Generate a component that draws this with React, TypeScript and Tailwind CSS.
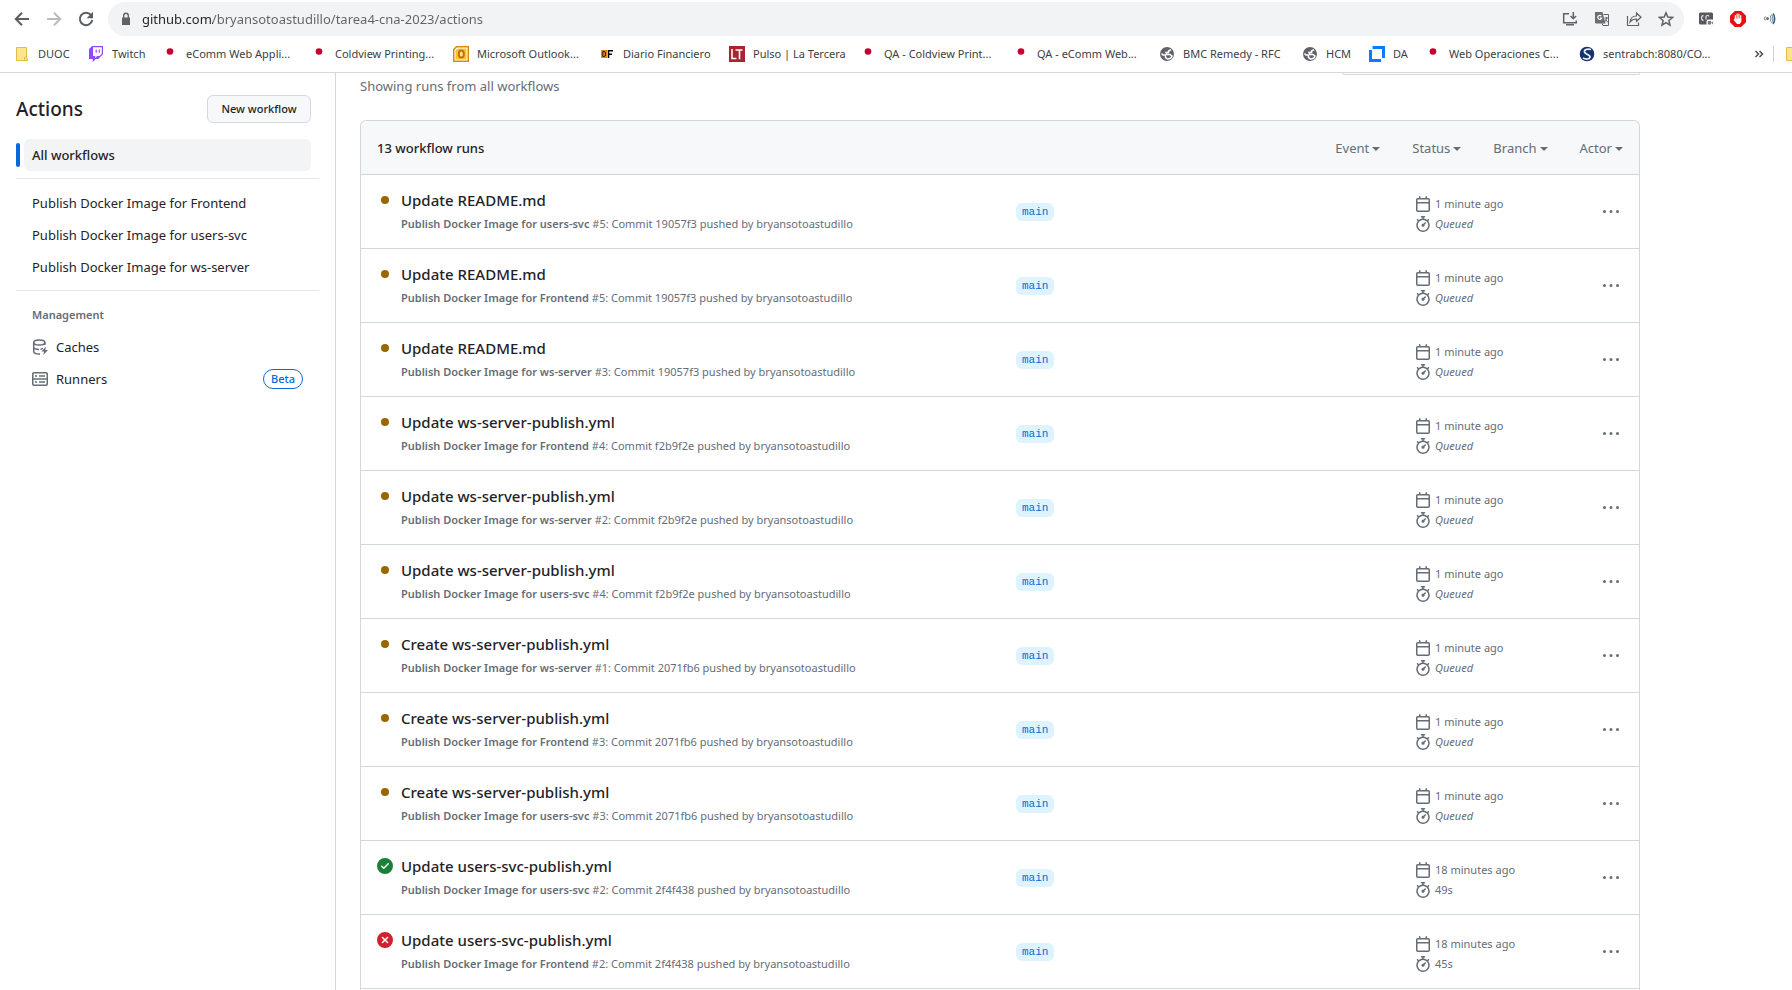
import React from "react";

const paths = {
  calendar:
    "M4.75 0a.75.75 0 0 1 .75.75V2h5V.75a.75.75 0 0 1 1.5 0V2h1.25c.966 0 1.75.784 1.75 1.75v10.5A1.75 1.75 0 0 1 13.25 16H2.75A1.75 1.75 0 0 1 1 14.25V3.75C1 2.784 1.784 2 2.75 2H4V.75A.75.75 0 0 1 4.75 0ZM2.5 7.5v6.75c0 .138.112.25.25.25h10.5a.25.25 0 0 0 .25-.25V7.5Zm10.75-4H2.75a.25.25 0 0 0-.25.25V6h11V3.75a.25.25 0 0 0-.25-.25Z",
  stopwatch:
    "M5.75.75A.75.75 0 0 1 6.5 0h3a.75.75 0 0 1 0 1.5h-.75v1l-.001.041a6.724 6.724 0 0 1 3.464 1.435l.007-.006.75-.75a.749.749 0 0 1 1.275.326.749.749 0 0 1-.215.734l-.75.75-.006.007a6.75 6.75 0 1 1-10.548 0L2.72 5.03l-.75-.75a.751.751 0 0 1 .018-1.042.751.751 0 0 1 1.042-.018l.75.75.007.006A6.72 6.72 0 0 1 7.25 2.541V1.5H6.5a.75.75 0 0 1-.75-.75ZM8 14.5a5.25 5.25 0 1 0-.001-10.501A5.25 5.25 0 0 0 8 14.5Zm.389-6.7 1.33-1.33a.75.75 0 1 1 1.061 1.06L9.45 8.861A1.503 1.503 0 0 1 8 10.75a1.499 1.499 0 1 1 .389-2.95Z",
  kebab:
    "M8 9a1.5 1.5 0 1 0 0-3 1.5 1.5 0 0 0 0 3ZM1.5 9a1.5 1.5 0 1 0 0-3 1.5 1.5 0 0 0 0 3Zm13 0a1.5 1.5 0 1 0 0-3 1.5 1.5 0 0 0 0 3Z",
  success:
    "M8 16A8 8 0 1 1 8 0a8 8 0 0 1 0 16Zm3.78-9.72a.751.751 0 0 0-.018-1.042.751.751 0 0 0-1.042-.018L6.75 9.19 5.28 7.72a.751.751 0 0 0-1.042.018.751.751 0 0 0-.018 1.042l2 2a.75.75 0 0 0 1.06 0Z",
  failed:
    "M2.343 13.657A8 8 0 1 1 13.658 2.343 8 8 0 0 1 2.343 13.657ZM6.03 4.97a.751.751 0 0 0-1.042.018.751.751 0 0 0-.018 1.042L6.94 8 4.97 9.97a.749.749 0 0 0 .326 1.275.749.749 0 0 0 .734-.215L8 9.06l1.97 1.97a.749.749 0 0 0 1.275-.326.749.749 0 0 0-.215-.734L9.06 8l1.97-1.97a.749.749 0 0 0-.326-1.275.749.749 0 0 0-.734.215L8 6.94Z",
  queued: "M8 4a4 4 0 1 1 0 8 4 4 0 0 1 0-8Z",
};

function Icon({ name, className = "" }: { name: keyof typeof paths; className?: string }) {
  return (
    <svg viewBox="0 0 16 16" fill="currentColor" aria-hidden="true" className={`size-4 shrink-0 ${className}`}>
      <path d={paths[name]} />
    </svg>
  );
}

function Glyph({ children, className = "size-4" }: { children: React.ReactNode; className?: string }) {
  return (
    <svg viewBox="0 0 16 16" fill="none" aria-hidden="true" className={`shrink-0 ${className}`}>
      {children}
    </svg>
  );
}

const FolderGlyph = () => (
  <Glyph>
    <path d="M2.500 1.500h10v10.500l1 .5v2h-11z" fill="#fde68a" stroke="#e3bd45" />
    <path d="M10.500 14v-2.500h2" stroke="#e3bd45" />
  </Glyph>
);

const TwitchGlyph = () => (
  <Glyph>
    <path d="M4.200 0 1 3v10h3.700v3l3-3h2.500L15 8.300V0z" fill="#9146ff" />
    <path d="M5 1.200h8.800v6.500l-2.300 2.300H9.200l-2 2v-2H5z" fill="#fff" />
    <path d="M8.200 3.400v3.300M11.300 3.400v3.300" stroke="#9146ff" strokeWidth="1.200" />
  </Glyph>
);

const DotGlyph = () => (
  <Glyph>
    <circle cx="8" cy="5.500" r="3.300" fill="#c3002f" />
  </Glyph>
);

const OutlookGlyph = () => (
  <Glyph>
    <path d="M3.500.75h11.750v14.500H.75V3.500z" fill="#fff" stroke="#d98a0b" strokeWidth="1.500" />
    <path d="M4.500 2.500h9v11h-11v-9z" fill="#f7c52b" />
    <ellipse cx="8.300" cy="8" rx="2.500" ry="3.600" fill="#fbe9a6" stroke="#c96f07" strokeWidth="2" />
  </Glyph>
);

const DfGlyph = () => (
  <Glyph>
    <path d="M2 4h6v8H2z" fill="#e08a1e" />
    <path d="M3.800 5.500H5a1.500 1.500 0 0 1 1.500 1.500v2A1.500 1.500 0 0 1 5 10.500H3.800z" stroke="#2b1a05" />
    <path d="M9.500 12V4.800H14M9.500 8.200H13" stroke="#000" strokeWidth="1.600" />
  </Glyph>
);

const LtGlyph = () => (
  <Glyph>
    <path d="M0 0h16v16H0z" fill="#a8242e" />
    <path d="M3 3v9.500h4.500M6.500 4h7M10.500 4v9.300" stroke="#fff" strokeWidth="1.600" />
  </Glyph>
);

const GlobeGlyph = () => (
  <Glyph>
    <circle cx="8" cy="8" r="7" fill="#5f6368" />
    <path d="M2.500 7.500 4 9h2.500v2.500L8.500 13c2 0 4-1 4.500-3l-2-1.500H8L7 6.500h2.500V5L12 3.800" stroke="#fff" strokeWidth="1.500" />
  </Glyph>
);

const DaGlyph = () => (
  <Glyph>
    <path d="M3.500 1.500h8.500M14.500 3.500V12M12 14.500H4M1.500 12V4" stroke="#0a7cff" strokeWidth="3" />
    <path d="M12 0h4v4h-3V3h-1zM0 12h3v1h1v3H0z" fill="#0a7cff" />
  </Glyph>
);

const SentraGlyph = () => (
  <Glyph>
    <circle cx="8" cy="8" r="7.300" fill="#16336e" />
    <path d="M12 3.500C8 2.500 5 3.500 5.500 6s6 2.500 5.500 5-4 2.500-7 1" stroke="#e8f1fa" strokeWidth="1.700" />
  </Glyph>
);

const bookmarks = [
  { label: "DUOC", icon: FolderGlyph, slot: "w-[74px]" },
  { label: "Twitch", icon: TwitchGlyph, slot: "w-[74px]" },
  { label: "eComm Web Appli...", icon: DotGlyph, slot: "w-[149px]" },
  { label: "Coldview Printing...", icon: DotGlyph, slot: "w-[142px]" },
  { label: "Microsoft Outlook...", icon: OutlookGlyph, slot: "w-[146px]" },
  { label: "Diario Financiero", icon: DfGlyph, slot: "w-[130px]" },
  { label: "Pulso | La Tercera", icon: LtGlyph, slot: "w-[131px]" },
  { label: "QA - Coldview Print...", icon: DotGlyph, slot: "w-[153px]" },
  { label: "QA - eComm Web...", icon: DotGlyph, slot: "w-[146px]" },
  { label: "BMC Remedy - RFC", icon: GlobeGlyph, slot: "w-[143px]" },
  { label: "HCM", icon: GlobeGlyph, slot: "w-[67px]" },
  { label: "DA", icon: DaGlyph, slot: "w-[56px]" },
  { label: "Web Operaciones C...", icon: DotGlyph, slot: "w-[154px]" },
  { label: "sentrabch:8080/CO...", icon: SentraGlyph, slot: "w-[140px]" },
];

function Browser() {
  return (
    <header className="border-b border-[#d5d7da] bg-white">
      <div className="flex h-9 items-center pt-0.5">
        <div className="flex w-[108px] shrink-0 items-center gap-4 pl-3.5 text-[#5a5e63]">
          <button aria-label="Back">
            <Glyph>
              <path d="M15 8H2M8 1.800 1.800 8 8 14.200" stroke="currentColor" strokeWidth="2" />
            </Glyph>
          </button>
          <button aria-label="Forward" className="text-[#babcbe]">
            <Glyph>
              <path d="M1 8h13M8 1.800 14.200 8 8 14.200" stroke="currentColor" strokeWidth="2" />
            </Glyph>
          </button>
          <button aria-label="Reload">
            <Glyph>
              <path d="M13 4.200A6.200 6.200 0 1 0 14.200 9" stroke="currentColor" strokeWidth="2" />
              <path d="M15 .8v6.400H8.600z" fill="currentColor" />
            </Glyph>
          </button>
        </div>
        <div className="flex h-[34px] min-w-0 flex-1 items-center rounded-full bg-[#f1f3f4] px-2.5 text-[#5f6368]">
          <Glyph>
            <path d="M4 6.500h8v7.500H4z" fill="currentColor" />
            <path d="M5.700 7V4.500a2.300 2.300 0 0 1 4.600 0V7" stroke="currentColor" strokeWidth="1.400" />
          </Glyph>
          <input
            aria-label="Address"
            defaultValue="github.com/bryansotoastudillo/tarea4-cna-2023/actions"
            className="ml-2 min-w-0 flex-1 bg-[linear-gradient(90deg,#202124_71px,#5f6368_71px)] bg-clip-text text-[13px] leading-5 text-transparent outline-none"
          />
          <div className="flex items-center gap-4">
            <button aria-label="Install app">
              <Glyph>
                <path d="M7 2.700H1.700v9H14.300V9.500M4 13.800h8" stroke="currentColor" strokeWidth="1.500" />
                <path d="M11.300 1v6.500M8.500 5l2.800 2.800L14.100 5" stroke="currentColor" strokeWidth="1.500" />
              </Glyph>
            </button>
            <button aria-label="Translate">
              <Glyph>
                <path d="M1 1h7.500l3 11.500H2a1 1 0 0 1-1-1z" fill="#6b6f73" />
                <path d="M7.300 5A2 2 0 1 0 7.700 7H6" stroke="#fff" strokeWidth="1.200" />
                <path d="M9.500 3.500h5v11H9L8 12.500M10.500 7h3.500M12.500 6v1c0 2-1 3.500-2 4M11.500 8.500l2.500 3" stroke="currentColor" />
              </Glyph>
            </button>
            <button aria-label="Share">
              <Glyph>
                <path d="M1.500 5v9.500h11V11.500M4 11c.5-4 3-6 6.500-6V2l4.500 4.300-4.500 4V8C8 8 5.500 9 4 11z" stroke="currentColor" strokeWidth="1.200" />
              </Glyph>
            </button>
            <button aria-label="Bookmark this page">
              <Glyph>
                <path d="m8 1.800 1.800 4.300 4.700.4-3.600 3 1.100 4.600L8 11.700l-4 2.400 1.100-4.600-3.600-3 4.700-.4z" stroke="currentColor" strokeWidth="1.500" />
              </Glyph>
            </button>
          </div>
        </div>
        <div className="flex shrink-0 items-center gap-4 px-3.5">
          <button aria-label="Media extension">
            <Glyph>
              <rect x="1" y="1.500" width="14" height="12" rx="1.500" fill="#55585c" />
              <path d="M5.500 4.500a2 2.500 0 1 0 0 5M8 8.500V6.500a1.500 1.500 0 0 1 3-1" stroke="#d8d9da" strokeWidth="1.300" />
              <rect x="8.500" y="8.500" width="7.500" height="7" rx="2" fill="#fff" />
              <path d="M9.800 10h3.200v3.500H9.800zM13 11.500l2-1v3z" fill="#777a7e" />
            </Glyph>
          </button>
          <button aria-label="Ad blocker">
            <Glyph>
              <path d="M4.800 0h6.400L16 4.800v6.400L11.200 16H4.800L0 11.200V4.800z" fill="#e8110f" />
              <path d="M5.300 8V4.500M7.100 7.500V3M8.900 7.500V3M10.700 8V4.500" stroke="#fff" strokeWidth="1.200" strokeLinecap="round" />
              <path d="M4.700 7.500h6.600v3L9.800 13H7L3.600 9z" fill="#fff" />
            </Glyph>
          </button>
          <button aria-label="Sound extension">
            <Glyph>
              <circle cx="5.500" cy="7.500" r="1.500" fill="#68727c" />
              <path d="M3.300 5.500a3 3 0 0 0 0 4M8 4.500c1.300 1.500 1.300 4.500 0 6" stroke="#68727c" />
              <path d="M9.500 3.500c2 2 2 6.500 0 8.500" stroke="#7f98ad" strokeWidth="1.300" />
              <path d="M11 2.500c2.300 2.500 2.300 8 0 10.500" stroke="#345f86" strokeWidth="1.500" />
            </Glyph>
          </button>
        </div>
      </div>
      <nav aria-label="Bookmarks" className="flex h-9 items-center overflow-hidden pl-3.5 text-[11px] leading-4 text-[#3c4043]">
        {bookmarks.map(({ label, icon: BookmarkIcon, slot }) => (
          <a key={label} href="#" className={`flex shrink-0 items-center gap-2 whitespace-nowrap ${slot}`}>
            <BookmarkIcon />
            {label}
          </a>
        ))}
        <div className="ml-auto flex shrink-0 items-center">
          <button aria-label="More bookmarks">
            <Glyph>
              <path d="m4.500 5 3 3-3 3M8.500 5l3 3-3 3" stroke="#4b4f54" strokeWidth="1.500" />
            </Glyph>
          </button>
          <span className="ml-1.5 h-4 w-px bg-[#cfd1d4]" />
          <a href="#" aria-label="Other bookmarks" className="ml-2.5 w-2 overflow-hidden">
            <FolderGlyph />
          </a>
        </div>
      </nav>
    </header>
  );
}

const workflows = [
  "Publish Docker Image for Frontend",
  "Publish Docker Image for users-svc",
  "Publish Docker Image for ws-server",
];

function Sidebar() {
  return (
    <aside className="w-[336px] shrink-0 border-r border-[#d0d7de] pl-4 text-[13px] leading-5">
      <div className="mt-5 flex h-8 items-center justify-between pr-6">
        <h2 className="text-[19px] leading-8 font-medium">Actions</h2>
        <button className="h-7 w-26 rounded-md border border-[#d5d8dc] bg-[#f6f8fa] text-[11px] leading-5 font-medium">
          New workflow
        </button>
      </div>
      <div className="mr-4 border-b border-[#e3e6e9] pt-3.5 pr-2 pb-[7px]">
        <a href="#" className="flex items-center gap-1 font-medium">
          <span className="h-6 w-1 rounded-xs bg-[#0969da]" />
          <span className="flex-1 rounded-md bg-[#f3f4f6] px-2 py-1.5">All workflows</span>
        </a>
      </div>
      <ul className="mr-4 border-b border-[#e3e6e9] pt-2 pb-[7px]">
        {workflows.map((name) => (
          <li key={name}>
            <a href="#" className="block px-4 py-1.5">
              {name}
            </a>
          </li>
        ))}
      </ul>
      <div className="mr-4 pt-2">
        <h3 className="px-4 py-1.5 text-[11px] leading-5 font-semibold text-[#656d76]">Management</h3>
        <a href="#" className="flex items-center gap-2 px-4 py-1.5">
          <Glyph className="size-4 text-[#656d76]">
            <ellipse cx="7.300" cy="3.500" rx="5.600" ry="2.500" stroke="currentColor" strokeWidth="1.500" />
            <path d="M1.700 3.500v9c0 1.400 2.500 2.500 5.600 2.500h.7M1.700 8c0 1.400 2.300 2.400 5.300 2.500M12.900 3.500V6M8.500 10.200c1-.2 1.800-.5 2.500-.9" stroke="currentColor" strokeWidth="1.500" />
            <path d="m14 7.500-4.500 5h2.600L11.300 16l4.700-5h-2.700z" fill="currentColor" />
          </Glyph>
          Caches
        </a>
        <a href="#" className="flex items-center gap-2 px-4 py-1.5">
          <Glyph className="size-4 text-[#656d76]">
            <rect x=".75" y="1.750" width="14.500" height="12.500" rx="1.200" stroke="currentColor" strokeWidth="1.500" />
            <path d="M1 8h14M3 5h2M7 5h6M3 11h2M7 11h6" stroke="currentColor" strokeWidth="1.500" />
          </Glyph>
          Runners
          <span className="-my-px ml-auto rounded-full border border-[#0969da] px-[7px] text-[11px] leading-[18px] font-medium text-[#0969da]">
            Beta
          </span>
        </a>
      </div>
    </aside>
  );
}

type Run = { title: string; flow: string; no: number; sha: string; status?: "success" | "failed"; time?: string };

const runs: Run[] = [
  { title: "Update README.md", flow: "users-svc", no: 5, sha: "19057f3" },
  { title: "Update README.md", flow: "Frontend", no: 5, sha: "19057f3" },
  { title: "Update README.md", flow: "ws-server", no: 3, sha: "19057f3" },
  { title: "Update ws-server-publish.yml", flow: "Frontend", no: 4, sha: "f2b9f2e" },
  { title: "Update ws-server-publish.yml", flow: "ws-server", no: 2, sha: "f2b9f2e" },
  { title: "Update ws-server-publish.yml", flow: "users-svc", no: 4, sha: "f2b9f2e" },
  { title: "Create ws-server-publish.yml", flow: "ws-server", no: 1, sha: "2071fb6" },
  { title: "Create ws-server-publish.yml", flow: "Frontend", no: 3, sha: "2071fb6" },
  { title: "Create ws-server-publish.yml", flow: "users-svc", no: 3, sha: "2071fb6" },
  { title: "Update users-svc-publish.yml", flow: "users-svc", no: 2, sha: "2f4f438", status: "success", time: "49s" },
  { title: "Update users-svc-publish.yml", flow: "Frontend", no: 2, sha: "2f4f438", status: "failed", time: "45s" },
];

const statusColor = { queued: "text-[#9a6700]", success: "text-[#1a7f37]", failed: "text-[#cf222e]" };

function RunRow({ run }: { run: Run }) {
  const status = run.status ?? "queued";
  return (
    <li className="flex h-[74px] items-center border-b border-[#d0d7de] px-4">
      <div className="flex min-w-0 flex-1 gap-2">
        <Icon name={status} className={`mt-1 ${statusColor[status]}`} />
        <div className="min-w-0">
          <a href="#" className="block truncate text-[15px] leading-6 font-medium">
            {run.title}
          </a>
          <p className="truncate text-[11px] leading-[23px] text-[#656d76]">
            <span className="font-semibold">Publish Docker Image for {run.flow}</span> #{run.no}: Commit {run.sha} pushed by
            bryansotoastudillo
          </p>
        </div>
      </div>
      <div className="flex w-[399px] shrink-0">
        <a
          href="#"
          className="rounded-md bg-[#ddf4ff] px-1.5 font-['Liberation_Mono',monospace] text-[11px] leading-[18px] text-[#0969da]"
        >
          main
        </a>
      </div>
      <div className="w-[188px] shrink-0 pt-1 text-[11px] leading-5 text-[#656d76]">
        <div className="flex items-center gap-1">
          <Icon name="calendar" />
          {run.status ? "18 minutes ago" : "1 minute ago"}
        </div>
        <div className="flex items-center gap-1">
          <Icon name="stopwatch" />
          {run.time ?? <em>Queued</em>}
        </div>
      </div>
      <button aria-label="Show options" className="mr-1 text-[#656d76]">
        <Icon name="kebab" />
      </button>
    </li>
  );
}

export default function App() {
  return (
    <div className="flex h-screen flex-col overflow-hidden bg-white font-['Noto_Sans',sans-serif] text-[#1f2328]">
      <Browser />
      <div className="flex min-h-0 flex-1">
        <Sidebar />
        <main className="min-w-0 flex-1 overflow-hidden pr-[152px] pl-6">
          <div className="flex justify-between text-[#656d76]">
            <p className="text-[13px] leading-[26px]">Showing runs from all workflows</p>
            <div className="h-0.5 w-[298px] rounded-b-md border-x border-b border-[#d0d7de]" />
          </div>
          <section className="mt-[21px] rounded-t-md border border-b-0 border-[#d0d7de] pb-2">
            <div className="flex h-[54px] items-center justify-between rounded-t-md border-b border-[#d0d7de] bg-[#f6f8fa] px-4 text-[13px] leading-5">
              <h3 className="font-medium">13 workflow runs</h3>
              <div className="flex gap-8 text-[#656d76]">
                {["Event", "Status", "Branch", "Actor"].map((filter) => (
                  <button key={filter} className="flex items-center gap-[3px]">
                    {filter}
                    <svg viewBox="0 0 8 4" fill="currentColor" aria-hidden="true" className="mt-0.5 h-1 w-2">
                      <path d="M0 0h8L4 4z" />
                    </svg>
                  </button>
                ))}
              </div>
            </div>
            <ul>
              {runs.map((run, i) => (
                <RunRow key={i} run={run} />
              ))}
            </ul>
          </section>
        </main>
      </div>
    </div>
  );
}
